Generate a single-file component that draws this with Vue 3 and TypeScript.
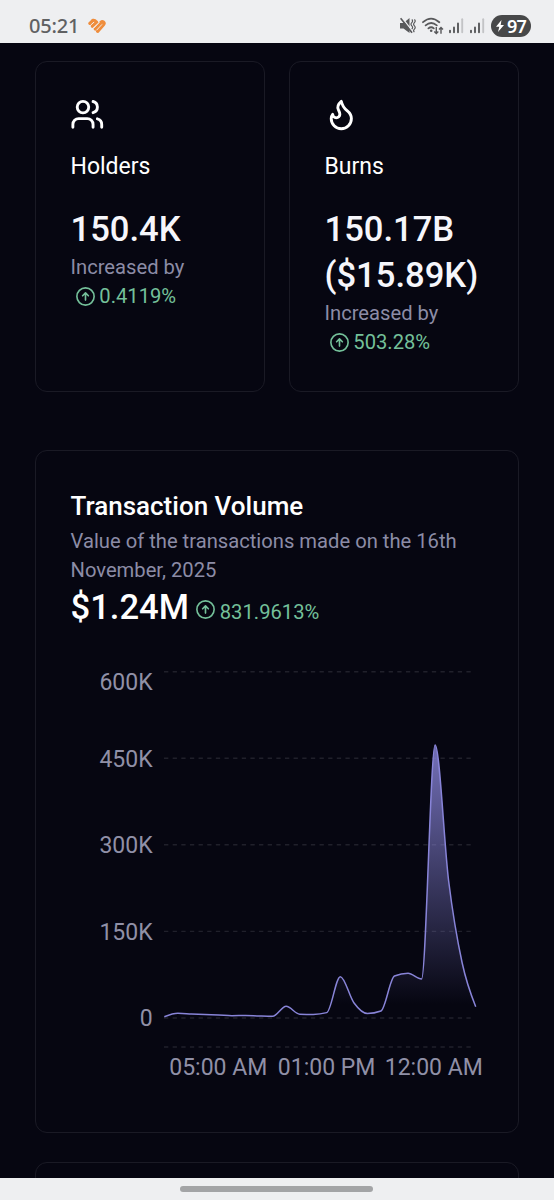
<script setup lang="ts">
interface Stat {
  icon: 'users' | 'flame'
  label: string
  value: string
  change: string
}

const stats: Stat[] = [
  { icon: 'users', label: 'Holders', value: '150.4K', change: '0.4119%' },
  { icon: 'flame', label: 'Burns', value: '150.17B ($15.89K)', change: '503.28%' },
]

const left = 93.3
const step = 13.54
const heights: number[] = [
  1.3, 4.7, 4, 3.4, 3, 2.3, 2.5, 2, 1.7, 11.7, 3.8, 3.6, 5.4, 41.3, 15.3, 4.5, 7, 42, 44.7, 39,
  273, 137, 55, 11.3,
]
const baseY = 387
const points = heights.map((h, i) => ({ x: left + i * step, y: baseY - h }))

// Monotone cubic interpolation through the hourly points
function monotonePath(pts: { x: number; y: number }[]): string {
  const n = pts.length
  const slopes = pts.slice(1).map((p, i) => (p.y - pts[i].y) / (p.x - pts[i].x))
  const tangents: number[] = new Array(n).fill(0)
  for (let i = 1; i < n - 1; i++) {
    const a = slopes[i - 1]
    const b = slopes[i]
    tangents[i] =
      (Math.sign(a) + Math.sign(b)) * Math.min(Math.abs(a), Math.abs(b), 0.5 * Math.abs((a + b) / 2))
  }
  tangents[0] = (3 * slopes[0] - tangents[1]) / 2
  tangents[n - 1] = (3 * slopes[n - 2] - tangents[n - 2]) / 2
  let d = `M${pts[0].x},${pts[0].y}`
  for (let i = 1; i < n; i++) {
    const p = pts[i - 1]
    const q = pts[i]
    const dx = (q.x - p.x) / 3
    d += `C${p.x + dx},${p.y + dx * tangents[i - 1]},${q.x - dx},${q.y - dx * tangents[i]},${q.x},${q.y}`
  }
  return d
}

const linePath = monotonePath(points)
const areaPath = `${linePath}L${points[points.length - 1].x},${baseY}L${left},${baseY}Z`

const gridLines = [40.8, 127.3, 213.8, 300.4, 387, 416]
const yLabels = [
  { text: '600K', y: 59.3 },
  { text: '450K', y: 136 },
  { text: '300K', y: 222.3 },
  { text: '150K', y: 309 },
  { text: '0', y: 395.3 },
]
const xLabels = [
  { text: '05:00 AM', x: 147.3 },
  { text: '01:00 PM', x: 255.6 },
  { text: '12:00 AM', x: 362.8 },
]
</script>

<template>
  <div class="screen">
    <header class="status">
      <span class="clock">05:21</span>
      <svg class="heart" viewBox="0 0 18 16">
        <g fill="none" stroke="#ef8d3c" stroke-width="3.2" stroke-linecap="round" stroke-linejoin="round">
          <path d="M1.9 5.4 5 2.4" />
          <path d="M4.3 8.2 8.6 4.2 6.6 2.5 5 2.4" />
          <path d="M7.3 11 13 4.4C14.6 2.6 17 4.6 15.7 6.4L9.6 13.4" />
        </g>
        <path d="M8.6 12.2 14 6.4M6.1 9.8 11.6 4.2M3.3 6.6 6.1 4" fill="none" stroke="#eeeff1" stroke-width=".9" />
      </svg>
      <div class="indicators">
        <svg class="mute" viewBox="0 0 16 18">
          <path d="M0 6h3.5L9.5 1v15L3.5 11.5H0z" fill="#58595b" />
          <path d="M1.5 0 13 15" stroke="#eeeff1" stroke-width="1.4" />
          <path d="M.6 1.2 12 15.8" stroke="#58595b" stroke-width="1.7" />
          <path d="M11.8 2.5q1.6 1.6 0 3.2t0 3.2t0 3.2M14.4 2.5q1.6 1.6 0 3.2t0 3.2t0 3.2t0 3" fill="none" stroke="#58595b" stroke-width="1.2" />
        </svg>
        <svg class="wifi" viewBox="0 0 22 18">
          <g fill="none" stroke="#58595b" stroke-width="1.8" stroke-linecap="round">
            <path d="M1 5.2Q9 -2 17.3 5.2" />
            <path d="M3.6 8.4Q9.2 3.7 14.8 8.4" />
            <path d="M6.4 11.4Q9.2 9 11.8 11.4" />
          </g>
          <circle cx="9.2" cy="13.7" r="1.3" fill="#58595b" />
          <path d="M14.3 10v6.3M12.3 14.4l2 2 2-2M19 16.8v-6.3M17 12.4l2-2 2 2" fill="none" stroke="#58595b" stroke-width="1.4" />
        </svg>
        <svg v-for="n in 2" :key="n" class="signal" viewBox="0 0 15 16">
          <g fill="none" stroke="#58595b" stroke-width="1.9" stroke-linecap="round">
            <path d="M1 12.6V14.3M5 9.5V14.3M9 5.5V14.3" />
            <path d="M13.2 1.2V14.3" stroke="#c3c4c6" />
          </g>
        </svg>
        <div class="battery">
          <svg class="bolt" viewBox="0 0 8 12"><path d="M5.5 0 0 6.8h3.3L2 12l6-7H4.7z" fill="#fff" /></svg>
          <span>97</span>
        </div>
      </div>
    </header>

    <main class="content">
      <section class="stats">
        <article v-for="stat in stats" :key="stat.label" class="card stat">
          <svg class="stat-icon" viewBox="0 0 24 24">
            <g v-if="stat.icon === 'users'">
              <path d="M16 21v-2a4 4 0 0 0-4-4H6a4 4 0 0 0-4 4v2" />
              <circle cx="9" cy="7" r="4" />
              <path d="M22 21v-2a4 4 0 0 0-3-3.87" />
              <path d="M16 3.13a4 4 0 0 1 0 7.75" />
            </g>
            <path
              v-else
              d="M8.5 14.5A2.5 2.5 0 0 0 11 12c0-1.38-.5-2-1-3-1.072-2.143-.224-4.054 2-6 .5 2.5 2 4.9 4 6.5 2 1.6 3 3.5 3 5.5a7 7 0 1 1-14 0c0-1.153.433-2.294 1-3a2.5 2.5 0 0 0 2.5 2.5z"
            />
          </svg>
          <div class="label">{{ stat.label }}</div>
          <div class="value">{{ stat.value }}</div>
          <div class="muted">Increased by</div>
          <div class="change">
            <svg class="arrow" viewBox="0 0 24 24">
              <path d="m15 11.25-3-3m0 0-3 3m3-3v7.5M21 12a9 9 0 1 1-18 0 9 9 0 0 1 18 0Z" />
            </svg>
            <span>{{ stat.change }}</span>
          </div>
        </article>
      </section>

      <section class="card volume">
        <h2 class="title">Transaction Volume</h2>
        <p class="muted">Value of the transactions made on the 16th November, 2025</p>
        <div class="total">
          <span class="value">$1.24M</span>
          <div class="change">
            <svg class="arrow" viewBox="0 0 24 24">
              <path d="m15 11.25-3-3m0 0-3 3m3-3v7.5M21 12a9 9 0 1 1-18 0 9 9 0 0 1 18 0Z" />
            </svg>
            <span>831.9613%</span>
          </div>
        </div>
        <svg class="chart" viewBox="0 0 412 460">
          <defs>
            <linearGradient id="volumeFill" x1="0" y1="0" x2="0" y2="1">
              <stop offset="5%" stop-color="#8884d8" stop-opacity=".8" />
              <stop offset="95%" stop-color="#8884d8" stop-opacity="0" />
            </linearGradient>
          </defs>
          <line v-for="y in gridLines" :key="y" class="grid" x1="93" x2="401" :y1="y" :y2="y" />
          <path :d="areaPath" fill="url(#volumeFill)" />
          <path class="line" :d="linePath" />
          <text v-for="l in yLabels" :key="l.text" class="tick end" x="81.6" :y="l.y">{{ l.text }}</text>
          <text v-for="l in xLabels" :key="l.text" class="tick middle" :x="l.x" y="444">{{ l.text }}</text>
        </svg>
      </section>

      <section class="card next"></section>
    </main>

    <footer class="navbar"><div class="handle"></div></footer>
  </div>
</template>

<style>
body {
  margin: 0;
  background: #060611;
}
</style>

<style scoped>
.screen {
  box-sizing: border-box;
  width: 554px;
  height: 1200px;
  display: flex;
  flex-direction: column;
  overflow: hidden;
  background: #060611;
  color: #fff;
  font-family: Roboto, 'Liberation Sans', sans-serif;
}
.status {
  flex: none;
  box-sizing: border-box;
  height: 43px;
  padding: 8px 23px 0 29px;
  display: flex;
  align-items: center;
  background: #eeeff1;
}
.clock {
  font: 500 20px/28px 'Noto Sans', sans-serif;
  letter-spacing: -0.2px;
  color: #606163;
}
.heart {
  width: 18px;
  height: 16px;
  margin-left: 9px;
}
.indicators {
  margin-left: auto;
  display: flex;
  align-items: center;
}
.mute {
  width: 16px;
  height: 18px;
  margin-right: 6px;
}
.wifi {
  width: 22px;
  height: 18px;
  margin-right: 5px;
}
.signal {
  width: 15px;
  height: 16px;
  margin-right: 6px;
}
.battery {
  display: flex;
  align-items: center;
  justify-content: center;
  gap: 3px;
  width: 40px;
  height: 22px;
  border-radius: 11px;
  background: #474849;
  color: #fff;
  font: 600 18px/22px 'Noto Sans', sans-serif;
  letter-spacing: -0.9px;
}
.bolt {
  width: 8px;
  height: 12px;
}
.content {
  flex: 1;
  min-height: 0;
  overflow: hidden;
  padding: 18px 35px 0;
}
.card {
  box-sizing: border-box;
  border: 1px solid #1a1a25;
  border-radius: 12px;
}
.stats {
  display: grid;
  grid-template-columns: 1fr 1fr;
  gap: 24px;
}
.stat {
  height: 331px;
  padding: 35.4px 34px 0 34.5px;
}
.stat-icon {
  display: block;
  width: 34.6px;
  height: 34.6px;
  margin: 0 0 18px -0.6px;
  fill: none;
  stroke: #fff;
  stroke-width: 2;
  stroke-linecap: round;
  stroke-linejoin: round;
}
.label {
  font-size: 23px;
  line-height: 34.6px;
  margin-bottom: 21.6px;
}
.value {
  font-size: 34.6px;
  line-height: 46.1px;
  font-weight: 500;
  color: #f6f6fb;
}
.muted {
  margin: 0;
  font-size: 20.2px;
  line-height: 28.8px;
  color: #8c8ca6;
}
.stat .muted {
  margin-top: 0.6px;
}
.change {
  display: flex;
  align-items: center;
  gap: 2.3px;
  padding-left: 3.5px;
  font-size: 20.2px;
  line-height: 28.8px;
  color: #74c09a;
}
.arrow {
  width: 23px;
  height: 23px;
  fill: none;
  stroke: currentColor;
  stroke-width: 1.7;
  stroke-linecap: round;
  stroke-linejoin: round;
}
.volume {
  height: 683px;
  margin-top: 58px;
  padding: 35.2px 34px 0 34.5px;
}
.volume .muted {
  position: relative;
  top: 0.5px;
}
.title {
  margin: 0;
  font-size: 26px;
  line-height: 40.3px;
  font-weight: 500;
}
.total {
  display: flex;
  align-items: flex-start;
  height: 46.1px;
}
.total .value {
  color: #fff;
}
.total .change {
  margin-top: 14px;
  padding-left: 5.5px;
}
.total .arrow {
  margin-bottom: 5px;
}
.chart {
  display: block;
  width: 412px;
  height: 460px;
  margin: 0.4px 0 0 0.5px;
  overflow: visible;
}
.grid {
  stroke: #20202b;
  stroke-width: 1.4;
  stroke-dasharray: 4.32 4.32;
}
.line {
  fill: none;
  stroke: #8884d8;
  stroke-width: 1.5;
}
.tick {
  fill: #9090a7;
  font-size: 23px;
}
.end {
  text-anchor: end;
}
.middle {
  text-anchor: middle;
}
.next {
  height: 200px;
  margin-top: 29px;
}
.navbar {
  flex: none;
  height: 22px;
  display: flex;
  justify-content: center;
  background: #eeeff1;
}
.handle {
  width: 193px;
  height: 6px;
  margin: 8px 1px 0 0;
  border-radius: 3px;
  background: #a3a4a6;
}
</style>
